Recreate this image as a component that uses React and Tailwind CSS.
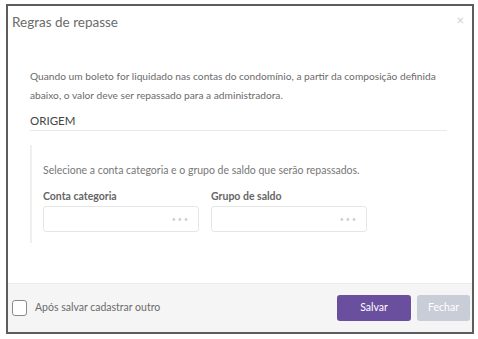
export default function App() {
  return (
    <div className="w-[478px] h-[339px] bg-white pt-[4px] pl-[6px]" style={{ fontFamily: 'Lato, "Open Sans", sans-serif' }}>
      <div className="w-[468px] h-[330px] border-2 border-[#5c5c5c] bg-white flex flex-col">
        {/* Header */}
        <div className="h-[40px] flex justify-between pl-[4px] pr-[8px]">
          <div className="pt-[5px] text-[13.5px] leading-[22px] text-[#6b6b6b]">Regras de repasse</div>
          <div className="pt-[7px] text-[13px] leading-[14px] text-[#cfcfcf]">×</div>
        </div>

        {/* Body */}
        <div className="flex-1 pl-[22px] pr-[25px]">
          <p className="mt-[21px] text-[10.2px] leading-[19px] text-[#6b6b6b]">
            Quando um boleto for liquidado nas contas do condomínio, a partir da composição definida abaixo, o valor deve ser repassado para a administradora.
          </p>
          <div className="mt-[7px] text-[11.5px] leading-[18px] text-[#444] border-b border-[#e9e9e9]">ORIGEM</div>

          <div className="mt-[14px] border-l-2 border-[#efefef] pl-[11px] pt-[17px] pb-[11px]">
            <div className="text-[10.5px] leading-[16px] text-[#777]">
              Selecione a conta categoria e o grupo de saldo que serão repassados.
            </div>
            <div className="mt-[10px] flex gap-[12px]">
              <div className="w-[156px]">
                <div className="text-[10.5px] leading-[16px] font-bold text-[#666]">Conta categoria</div>
                <div className="mt-[2px] h-[26px] border border-[#e6e6e6] rounded-[3px] flex items-center justify-end pr-[8px] text-[#cfcfcf] text-[7px] tracking-[2px]">•••</div>
              </div>
              <div className="w-[156px]">
                <div className="text-[10.5px] leading-[16px] font-bold text-[#666]">Grupo de saldo</div>
                <div className="mt-[2px] h-[26px] border border-[#e6e6e6] rounded-[3px] flex items-center justify-end pr-[8px] text-[#cfcfcf] text-[7px] tracking-[2px]">•••</div>
              </div>
            </div>
          </div>
        </div>

        {/* Footer */}
        <div className="h-[49px] bg-[#f5f5f5] border-t border-[#ececec] flex items-center justify-between pl-[4px] pr-[2px]">
          <label className="flex items-center gap-[8px]">
            <span className="w-[15px] h-[16px] rounded-[3px] border border-[#8a8a8a] bg-white" />
            <span className="text-[10.5px] text-[#6b6b6b]">Após salvar cadastrar outro</span>
          </label>
          <div className="flex gap-[6px]">
            <button className="w-[74px] h-[26px] rounded-[3px] bg-[#6a4f9e] text-white text-[10.5px]">Salvar</button>
            <button className="w-[53px] h-[26px] rounded-[3px] bg-[#c9cdd8] text-white text-[10.5px]">Fechar</button>
          </div>
        </div>
      </div>
    </div>
  )
}
